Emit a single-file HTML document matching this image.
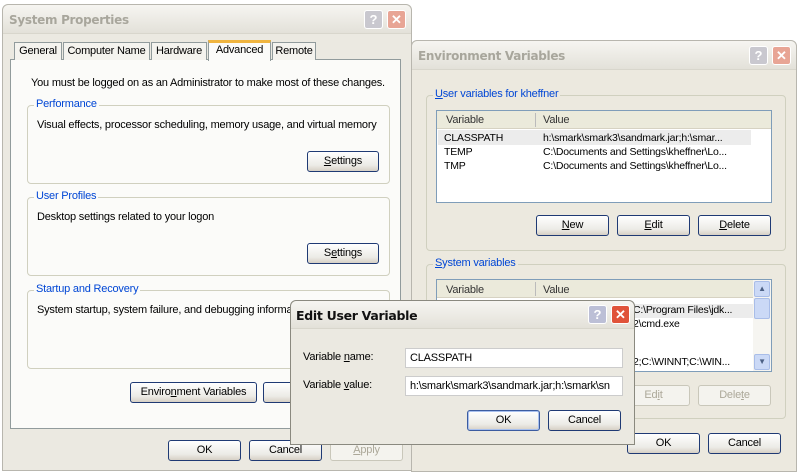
<!DOCTYPE html>
<html><head><style>
*{box-sizing:border-box;margin:0;padding:0}
body{width:800px;height:473px;background:#fff;position:relative;overflow:hidden;font-family:"Liberation Sans",sans-serif;font-size:11px;color:#000;letter-spacing:-0.2px}
.a{position:absolute}
.win{position:absolute;background:#ece9df;border:1px solid #b8b6ae;border-radius:6px 6px 0 0}
.tb{position:absolute;left:0;right:0;top:0;height:29px;background:linear-gradient(#f6f5f1,#e3e1d9);border-radius:6px 6px 0 0;border-bottom:1px solid #d8d6cc}
.tt{position:absolute;left:6px;top:8px;font-weight:bold;font-size:12px;color:#a8a69c;font-family:"DejaVu Sans",sans-serif;letter-spacing:-0.3px}
.hb,.xb{position:absolute;top:5px;width:19px;height:19px;border-radius:3px;border:1px solid #fff;color:#fff;font-weight:bold;text-align:center;line-height:17px;font-size:13px;letter-spacing:0}
.hb{background:#c9c8cf;color:#fff}
.xb{background:#e8a595}
.btn{position:absolute;height:21px;border:1px solid #1f3a74;border-radius:3px;background:linear-gradient(#fff,#ecebe6 70%,#d6d0c5);text-align:center;line-height:19px;font-size:11px}
.dis{border-color:#c9c7ba;color:#aca899;background:#f4f3ee}
.grp{position:absolute;border:1px solid #d0d0bf;border-radius:4px}
.gl{position:absolute;top:-8px;left:6px;background:#ece9df;padding:0 2px;color:#0046d5}
.list{position:absolute;background:#fff;border:1px solid #7f9db9}
.hd{position:absolute;left:0;right:0;top:0;height:18px;background:#ebeadb;border-bottom:1px solid #d6d2c2}
u{text-decoration:underline}
</style></head><body>
<div class="win" style="left:2px;top:4px;width:410px;height:467px;background:#ebe9e1">
<div class="tb"><div class="tt">System Properties</div><div class="hb" style="left:361px">?</div><div class="xb" style="left:384px">✕</div></div>
</div>
<div class="a" style="left:10px;top:59px;width:391px;height:370px;background:#fbfbf9;border:1px solid #919b9c"></div>
<div class="a" style="left:14px;top:42px;width:48px;height:18px;border:1px solid #919b9c;border-bottom:none;background:#f4f3ee;text-align:center;line-height:17px">General</div>
<div class="a" style="left:63px;top:42px;width:87px;height:18px;border:1px solid #919b9c;border-bottom:none;background:#f4f3ee;text-align:center;line-height:17px">Computer Name</div>
<div class="a" style="left:151px;top:42px;width:56px;height:18px;border:1px solid #919b9c;border-bottom:none;background:#f4f3ee;text-align:center;line-height:17px">Hardware</div>
<div class="a" style="left:208px;top:40px;width:63px;height:21px;border:1px solid #919b9c;border-top:3px solid #f0b540;border-bottom:none;background:#fbfbf9;text-align:center;line-height:15px">Advanced</div>
<div class="a" style="left:272px;top:42px;width:44px;height:18px;border:1px solid #919b9c;border-bottom:none;background:#f4f3ee;text-align:center;line-height:17px">Remote</div>
<div class="a" style="left:31px;top:77px">You must be logged on as an Administrator to make most of these changes.</div>
<div class="grp" style="left:27px;top:105px;width:363px;height:79px"><div class="gl" style="background:#fbfbf9">Performance</div></div>
<div class="a" style="left:37px;top:119px">Visual effects, processor scheduling, memory usage, and virtual memory</div>
<div class="btn" style="left:307px;top:151px;width:72px"><u>S</u>ettings</div>
<div class="grp" style="left:27px;top:197px;width:363px;height:79px"><div class="gl" style="background:#fbfbf9">User Profiles</div></div>
<div class="a" style="left:37px;top:211px">Desktop settings related to your logon</div>
<div class="btn" style="left:307px;top:243px;width:72px">S<u>e</u>ttings</div>
<div class="grp" style="left:27px;top:290px;width:363px;height:79px"><div class="gl" style="background:#fbfbf9">Startup and Recovery</div></div>
<div class="a" style="left:37px;top:304px">System startup, system failure, and debugging information</div>
<div class="btn" style="left:130px;top:382px;width:127px">Enviro<u>n</u>ment Variables</div>
<div class="btn" style="left:263px;top:382px;width:72px"></div>
<div class="btn" style="left:168px;top:440px;width:73px">OK</div>
<div class="btn" style="left:249px;top:440px;width:73px">Cancel</div>
<div class="btn dis" style="left:330px;top:440px;width:73px"><u>A</u>pply</div>

<div class="win" style="left:411px;top:40px;width:386px;height:432px">
<div class="tb"><div class="tt">Environment Variables</div><div class="hb" style="left:337px">?</div><div class="xb" style="left:360px">✕</div></div>
</div>
<div class="grp" style="left:426px;top:95px;width:360px;height:156px"><div class="gl"><u>U</u>ser variables for kheffner</div></div>
<div class="list" style="left:436px;top:110px;width:336px;height:93px">
<div class="hd"></div>
<div class="a" style="left:9px;top:3px;color:#333">Variable</div><div class="a" style="left:98px;top:2px;width:1px;height:14px;background:#bbb"></div>
<div class="a" style="left:106px;top:3px;color:#333">Value</div>
<div class="a" style="left:1px;top:19px;width:313px;height:15px;background:#ececec"></div>
<div class="a" style="left:7px;top:21px;font-size:10.5px">CLASSPATH</div><div class="a" style="left:106px;top:21px;font-size:10.5px">h:\smark\smark3\sandmark.jar;h:\smar...</div>
<div class="a" style="left:7px;top:35px;font-size:10.5px">TEMP</div><div class="a" style="left:106px;top:35px;font-size:10.5px">C:\Documents and Settings\kheffner\Lo...</div>
<div class="a" style="left:7px;top:49px;font-size:10.5px">TMP</div><div class="a" style="left:106px;top:49px;font-size:10.5px">C:\Documents and Settings\kheffner\Lo...</div>
</div>
<div class="btn" style="left:536px;top:215px;width:73px"><u>N</u>ew</div>
<div class="btn" style="left:617px;top:215px;width:73px"><u>E</u>dit</div>
<div class="btn" style="left:698px;top:215px;width:73px"><u>D</u>elete</div>
<div class="grp" style="left:426px;top:264px;width:360px;height:155px"><div class="gl"><u>S</u>ystem variables</div></div>
<div class="list" style="left:436px;top:279px;width:336px;height:93px">
<div class="hd" style="right:18px"></div>
<div class="a" style="left:9px;top:4px;color:#333">Variable</div><div class="a" style="left:98px;top:2px;width:1px;height:14px;background:#bbb"></div>
<div class="a" style="left:106px;top:4px;color:#333">Value</div>
<div class="a" style="left:196px;top:24px;width:121px;height:14px;background:#ececec"></div>
<div class="a" style="left:196px;top:24px;font-size:10.5px">C:\Program Files\jdk...</div>
<div class="a" style="left:196px;top:38px;font-size:10.5px">2\cmd.exe</div>
<div class="a" style="left:196px;top:76px;font-size:10.5px">2;C:\WINNT;C:\WIN...</div>
<div class="a" style="right:0;top:0;width:18px;height:91px;background:#f6f5f1"></div>
<div class="a" style="right:1px;top:1px;width:16px;height:16px;background:#cbd9f6;border:1px solid #a9bde8;border-radius:2px;text-align:center;font-size:8px;line-height:14px;color:#4d6185">▲</div>
<div class="a" style="right:1px;top:18px;width:16px;height:21px;background:#cbd9f6;border:1px solid #a9bde8;border-radius:2px"></div>
<div class="a" style="right:1px;top:74px;width:16px;height:16px;background:#cbd9f6;border:1px solid #a9bde8;border-radius:2px;text-align:center;font-size:8px;line-height:14px;color:#4d6185">▼</div>
</div>
<div class="btn dis" style="left:617px;top:385px;width:73px">Ed<u>i</u>t</div>
<div class="btn dis" style="left:698px;top:385px;width:73px">Dele<u>t</u>e</div>
<div class="btn" style="left:627px;top:433px;width:73px">OK</div>
<div class="btn" style="left:708px;top:433px;width:73px">Cancel</div>

<div class="win" style="left:290px;top:300px;width:345px;height:145px;border-color:#8a897f;background:#ebe9e1">
<div class="tb" style="height:28px"><div class="tt" style="color:#111;left:5px;top:7px;font-size:12.5px">Edit User Variable</div><div class="hb" style="left:297px;top:4px;background:#bcbfd6;color:#fff">?</div><div class="xb" style="left:320px;top:4px;background:#e0533a">✕</div></div>
</div>
<div class="a" style="left:303px;top:351px">Variable <u>n</u>ame:</div>
<div class="a" style="left:303px;top:379px">Variable <u>v</u>alue:</div>
<div class="a" style="left:405px;top:348px;width:218px;height:20px;background:#fff;border:1px solid #ccc;padding:3px 4px">CLASSPATH</div>
<div class="a" style="left:405px;top:376px;width:218px;height:20px;background:#fff;border:1px solid #ccc;padding:3px 4px;overflow:hidden;white-space:nowrap">h:\smark\smark3\sandmark.jar;h:\smark\sn</div>
<div class="btn" style="left:467px;top:410px;width:73px;border-color:#3c5ca0;box-shadow:inset 0 0 0 1px #a8c0ee">OK</div>
<div class="btn" style="left:548px;top:410px;width:73px">Cancel</div>
</body></html>
